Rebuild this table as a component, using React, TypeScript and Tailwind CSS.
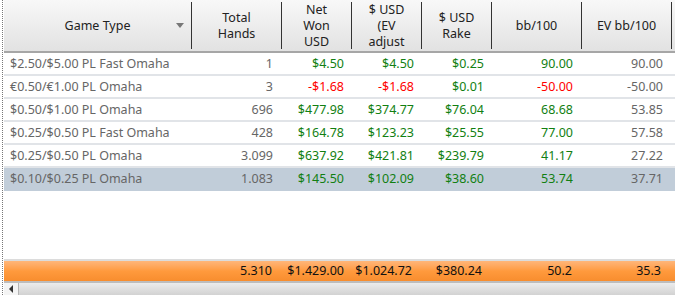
type Row = {
  game: string;
  hands: string;
  net: string;
  ev: string;
  rake: string;
  bb: string;
  evbb: string;
  selected?: boolean;
};

const rows: Row[] = [
  { game: '$2.50/$5.00 PL Fast Omaha', hands: '1', net: '$4.50', ev: '$4.50', rake: '$0.25', bb: '90.00', evbb: '90.00' },
  { game: '€0.50/€1.00 PL Omaha', hands: '3', net: '-$1.68', ev: '-$1.68', rake: '$0.01', bb: '-50.00', evbb: '-50.00' },
  { game: '$0.50/$1.00 PL Omaha', hands: '696', net: '$477.98', ev: '$374.77', rake: '$76.04', bb: '68.68', evbb: '53.85' },
  { game: '$0.25/$0.50 PL Fast Omaha', hands: '428', net: '$164.78', ev: '$123.23', rake: '$25.55', bb: '77.00', evbb: '57.58' },
  { game: '$0.25/$0.50 PL Omaha', hands: '3.099', net: '$637.92', ev: '$421.81', rake: '$239.79', bb: '41.17', evbb: '27.22' },
  { game: '$0.10/$0.25 PL Omaha', hands: '1.083', net: '$145.50', ev: '$102.09', rake: '$38.60', bb: '53.74', evbb: '37.71', selected: true },
];

const money = (v: string) => (v.startsWith('-') ? 'text-[#ff0000]' : 'text-[#127f12]');

export default function App() {
  return (
    <div
      className="w-[675px] h-[295px] bg-white overflow-hidden flex text-[12.5px] leading-none"
      style={{ fontFamily: '"Noto Sans", "Open Sans", sans-serif' }}
    >
      <div className="w-[2px]" />
      <div className="w-[2px] border-l border-dotted border-[#777]" />
      <div className="flex-1 flex flex-col">
        {/* header */}
        <div className="h-[53px] flex bg-gradient-to-b from-[#f8f8f8] to-[#e2e2e2] border-b-2 border-[#a6a6a6] text-[#222] pt-[2px] pb-[2px] leading-[16px]">
          <div className="w-[188px] border-r border-[#333] flex items-center justify-center relative">
            Game Type
            <span className="absolute left-[172px] top-[21px] w-0 h-0 border-l-[4px] border-r-[4px] border-t-[5px] border-l-transparent border-r-transparent border-t-[#777]" />
          </div>
          <div className="w-[90px] border-r border-[#333] flex items-center justify-center text-center">Total<br />Hands</div>
          <div className="w-[70px] border-r border-[#333] flex items-center justify-center text-center">Net<br />Won<br />USD</div>
          <div className="w-[70px] border-r border-[#333] flex items-center justify-center text-center">$ USD<br />(EV<br />adjust</div>
          <div className="w-[70px] border-r border-[#333] flex items-center justify-center text-center">$ USD<br />Rake</div>
          <div className="w-[90px] border-r border-[#333] flex items-center justify-center">bb/100</div>
          <div className="w-[90px] border-r border-[#333] flex items-center justify-center">EV bb/100</div>
          <div className="flex-1" />
        </div>

        {/* rows */}
        <div>
          {rows.map((r) => (
            <div
              key={r.game}
              className={`h-[23px] pt-[2px] flex items-center border-b-2 ${r.selected ? 'bg-[#c1cdd9] border-[#c1cdd9]' : 'border-[#e1e4e8]'}`}
            >
              <div className="w-[188px] pl-[6px] text-[#666]">{r.game}</div>
              <div className="w-[90px] pr-[9px] text-right text-[#666]">{r.hands}</div>
              <div className={`w-[70px] pr-[8px] text-right ${money(r.net)}`}>{r.net}</div>
              <div className={`w-[70px] pr-[8px] text-right ${money(r.ev)}`}>{r.ev}</div>
              <div className="w-[70px] pr-[8px] text-right text-[#127f12]">{r.rake}</div>
              <div className={`w-[90px] pr-[9px] text-right ${money(r.bb)}`}>{r.bb}</div>
              <div className="w-[90px] pr-[9px] text-right text-[#666]">{r.evbb}</div>
            </div>
          ))}
        </div>

        <div className="flex-1" />

        {/* totals */}
        <div className="border-t-2 border-[#dcdcdc] h-[22px] pt-[1px] flex items-center bg-gradient-to-b from-[#ffb679] via-[#ff9a3d] to-[#f88d2e] text-[#111]">
          <div className="w-[188px]" />
          <div className="w-[90px] pr-[10px] text-right">5.310</div>
          <div className="w-[70px] pr-[8px] text-right">$1.429.00</div>
          <div className="w-[70px] pr-[10px] text-right">$1.024.72</div>
          <div className="w-[70px] pr-[10px] text-right">$380.24</div>
          <div className="w-[90px] pr-[10px] text-right">50.2</div>
          <div className="w-[90px] pr-[11px] text-right">35.3</div>
        </div>

        {/* scrollbar */}
        <div className="h-[14px] border-t-2 border-[#bdbdbd] bg-gradient-to-b from-[#ececec] to-[#d2d2d2] flex">
          <div className="w-[15px] bg-[#f4f4f4] border-r border-[#b5b5b5] flex items-center justify-center">
            <span className="w-0 h-0 border-t-[4px] border-b-[4px] border-r-[4px] border-t-transparent border-b-transparent border-r-[#333]" />
          </div>
        </div>
      </div>
    </div>
  );
}
